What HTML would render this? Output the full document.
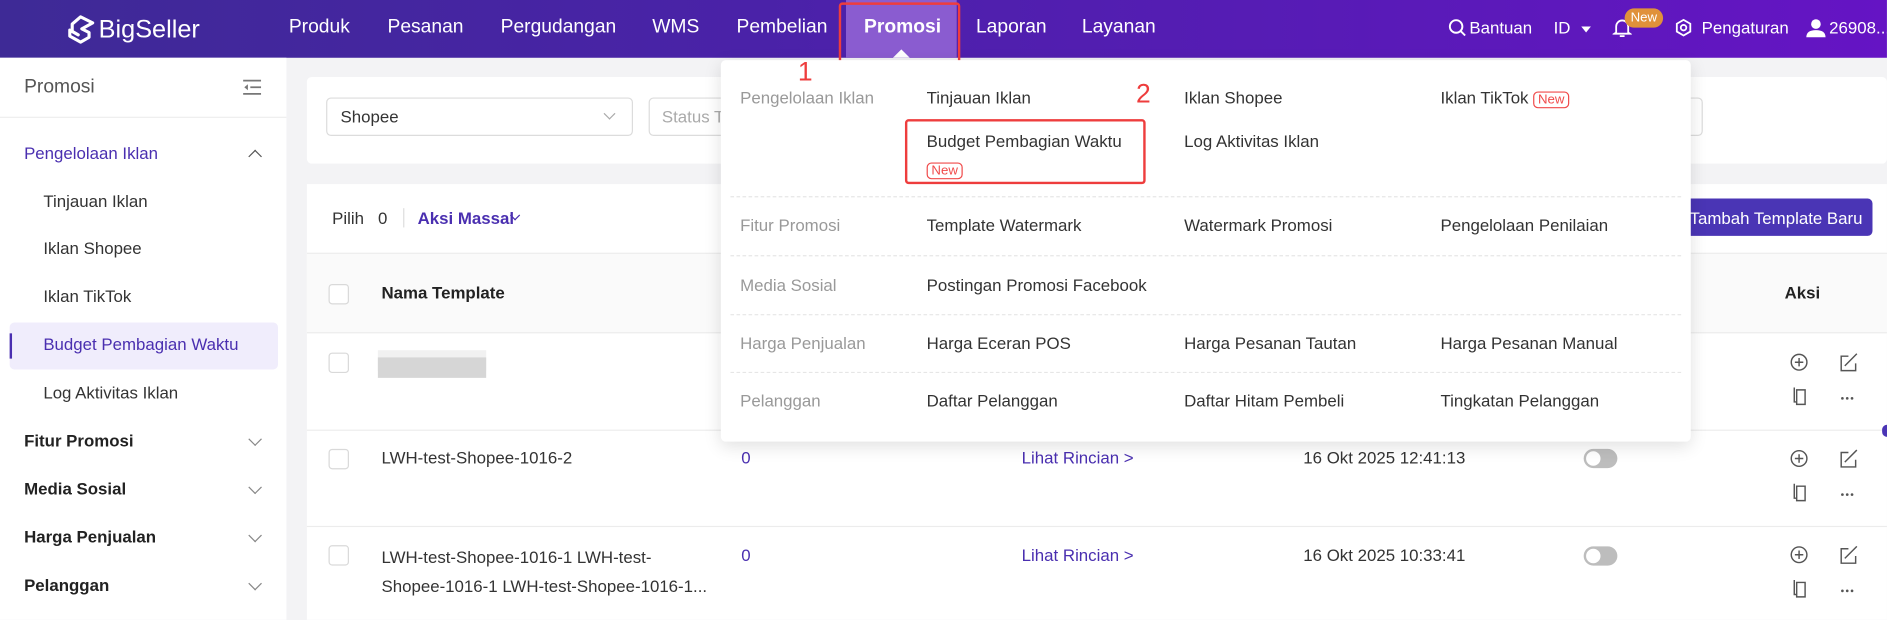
<!DOCTYPE html>
<html><head><meta charset="utf-8"><style>
html,body{margin:0;padding:0;width:1887px;height:620px;overflow:hidden;background:#f3f3f5;font-family:"Liberation Sans",Arial,sans-serif}
#w{position:absolute;left:0;top:0;width:1568px;height:515px;transform:scale(1.2034);transform-origin:0 0;background:#f3f3f5}
.a{position:absolute}
.t{position:absolute;white-space:nowrap;line-height:20px}
.nav{color:#fff;font-size:16px;top:13px}
.sb{font-size:14px;color:#333}
.sbh{font-size:14px;color:#222;font-weight:bold}
.chev{position:absolute;width:7px;height:7px;border-right:1.3px solid #888;border-bottom:1.3px solid #888;transform:rotate(45deg)}
.dl{font-size:14px;color:#999}
.di{font-size:14px;color:#333}
.sep{position:absolute;left:607px;width:790px;border-top:1px dashed #e6e6e6}
.new{display:inline-block;border:1px solid #f04a4a;color:#f04a4a;border-radius:4px;font-size:11px;line-height:12px;padding:0 3px}
.cb{position:absolute;width:15px;height:15px;border:1px solid #d9d9d9;border-radius:3px;background:#fff}
.rl{position:absolute;left:255px;width:1313px;border-top:1px solid #ececec}
.tg{position:absolute;width:28px;height:16px;border-radius:8px;background:#bdbdbd}
.tg:after{content:"";position:absolute;left:2px;top:2px;width:12px;height:12px;border-radius:6px;background:#fff}
</style></head><body><div id="w">
<!-- header -->
<div class="a" style="left:0;top:0;width:1568px;height:48px;background:linear-gradient(90deg,#3e2a96 0%,#4a22a8 40%,#6514c4 100%)"></div>
<svg class="a" style="left:54px;top:12px" width="26" height="26" viewBox="0 0 26 26"><path d="M13 2 L23 7 L14 12 L20 15 L20 19 L13 23 L4 18 L4 13 L11 17 L6 14 L6 8 Z" fill="none" stroke="#fff" stroke-width="2.6" stroke-linejoin="round"/></svg>
<div class="t" style="left:82px;top:13px;color:#fff;font-size:21px;line-height:24px">BigSeller</div>
<div class="a" style="left:703px;top:0;width:92px;height:48px;background:#8a5cd0"></div>
<div class="a" style="left:742px;top:41px;width:0;height:0;border-left:7px solid transparent;border-right:7px solid transparent;border-bottom:7px solid #fff"></div>
<div class="t nav" style="left:240px">Produk</div>
<div class="t nav" style="left:322px">Pesanan</div>
<div class="t nav" style="left:416px">Pergudangan</div>
<div class="t nav" style="left:542px">WMS</div>
<div class="t nav" style="left:612px">Pembelian</div>
<div class="t nav" style="left:718px;font-weight:bold">Promosi</div>
<div class="t nav" style="left:811px">Laporan</div>
<div class="t nav" style="left:899px">Layanan</div>
<div class="a" style="left:697px;top:2px;width:101px;height:56px;border:2px solid #ee3d3d;border-radius:3px;box-sizing:border-box"></div>
<svg class="a" style="left:1203px;top:15px" width="16" height="16" viewBox="0 0 16 16"><circle cx="7" cy="7" r="5.2" fill="none" stroke="#fff" stroke-width="1.6"/><path d="M11 11 L14.5 14.5" stroke="#fff" stroke-width="1.6"/></svg>
<div class="t" style="left:1221px;top:13px;color:#fff;font-size:14px">Bantuan</div>
<div class="t" style="left:1291px;top:13px;color:#fff;font-size:14px">ID</div>
<div class="a" style="left:1314px;top:22px;border-left:4px solid transparent;border-right:4px solid transparent;border-top:5px solid #fff"></div>
<svg class="a" style="left:1340px;top:14px" width="16" height="18" viewBox="0 0 16 18"><path d="M3 13 L3 8 A5 5 0 0 1 13 8 L13 13 L14.5 14 L1.5 14 Z M6 16 L10 16" fill="none" stroke="#fff" stroke-width="1.5"/></svg>
<div class="a" style="left:1350px;top:7px;width:32px;height:16px;border-radius:8px;background:#e0913a;color:#fff;font-size:11px;line-height:16px;text-align:center">New</div>
<svg class="a" style="left:1391px;top:15px" width="16" height="16" viewBox="0 0 16 16"><path d="M8 1.5 L13.6 4.75 L13.6 11.25 L8 14.5 L2.4 11.25 L2.4 4.75 Z" fill="none" stroke="#fff" stroke-width="1.5"/><circle cx="8" cy="8" r="2.3" fill="none" stroke="#fff" stroke-width="1.5"/></svg>
<div class="t" style="left:1414px;top:13px;color:#fff;font-size:14px">Pengaturan</div>
<svg class="a" style="left:1500px;top:14px" width="18" height="18" viewBox="0 0 18 18"><circle cx="9" cy="6" r="4" fill="#fff"/><path d="M1 17 Q1 11 9 11 Q17 11 17 17 Z" fill="#fff"/></svg>
<div class="t" style="left:1520px;top:13px;color:#fff;font-size:14px">26908...</div>
<!-- sidebar -->
<div class="a" style="left:0;top:48px;width:238px;height:467px;background:#fff"></div>
<div class="a" style="left:0;top:97px;width:238px;border-top:1px solid #eee"></div>
<div class="t" style="left:20px;top:63px;font-size:16px;color:#555">Promosi</div>
<svg class="a" style="left:202px;top:66px" width="15" height="13" viewBox="0 0 15 13"><path d="M0 1H15M6 6.5H15M0 12H15" stroke="#777" stroke-width="1.4"/><path d="M4 4L1 6.5L4 9Z" fill="#777"/></svg>
<div class="t" style="left:20px;top:117px;font-size:14px;color:#4a2fb0">Pengelolaan Iklan</div>
<div class="chev" style="left:208px;top:126px;transform:rotate(225deg);border-color:#555"></div>
<div class="t sb" style="left:36px;top:157px">Tinjauan Iklan</div>
<div class="t sb" style="left:36px;top:196px">Iklan Shopee</div>
<div class="t sb" style="left:36px;top:236px">Iklan TikTok</div>
<div class="a" style="left:8px;top:268px;width:223px;height:39px;background:#f0edfc;border-radius:4px"></div>
<div class="a" style="left:8px;top:277px;width:2px;height:21px;background:#4a2fb0"></div>
<div class="t sb" style="left:36px;top:276px;color:#4a2fb0">Budget Pembagian Waktu</div>
<div class="t sb" style="left:36px;top:316px">Log Aktivitas Iklan</div>
<div class="t sbh" style="left:20px;top:356px">Fitur Promosi</div>
<div class="t sbh" style="left:20px;top:396px">Media Sosial</div>
<div class="t sbh" style="left:20px;top:436px">Harga Penjualan</div>
<div class="t sbh" style="left:20px;top:476px">Pelanggan</div>
<div class="chev" style="left:208px;top:361px"></div>
<div class="chev" style="left:208px;top:401px"></div>
<div class="chev" style="left:208px;top:441px"></div>
<div class="chev" style="left:208px;top:481px"></div>
<!-- filter card -->
<div class="a" style="left:255px;top:64px;width:1313px;height:72px;background:#fff;border-radius:4px"></div>
<div class="a" style="left:271px;top:81px;width:255px;height:32px;border:1px solid #dcdcdc;border-radius:4px;box-sizing:border-box"></div>
<div class="t" style="left:283px;top:87px;font-size:14px;color:#333">Shopee</div>
<div class="chev" style="left:503px;top:91px;border-color:#aaa;width:6px;height:6px"></div>
<div class="a" style="left:539px;top:81px;width:876px;height:32px;border:1px solid #dcdcdc;border-radius:4px;box-sizing:border-box"></div>
<div class="t" style="left:550px;top:87px;font-size:14px;color:#aaa">Status T</div>
<!-- table card -->
<div class="a" style="left:255px;top:153px;width:1313px;height:362px;background:#fff"></div>
<div class="t" style="left:276px;top:171px;font-size:14px;color:#333">Pilih&nbsp;&nbsp;&nbsp;0</div>
<div class="a" style="left:335px;top:173px;height:16px;border-left:1px solid #ddd"></div>
<div class="t" style="left:347px;top:171px;font-size:14px;color:#4a2fb0;font-weight:bold">Aksi Massal</div>
<div class="chev" style="left:425px;top:176px;border-color:#4a2fb0;width:5px;height:5px;border-width:1px"></div>
<div class="a" style="left:1395px;top:165px;width:161px;height:31px;background:#4a35b5;border-radius:4px"></div>
<div class="t" style="left:1404px;top:171px;font-size:14px;color:#fff">Tambah Template Baru</div>
<div class="a" style="left:255px;top:210px;width:1313px;height:67px;background:#fafafa;border-top:1px solid #ececec;border-bottom:1px solid #ececec;box-sizing:border-box"></div>
<div class="cb" style="left:273px;top:236px"></div>
<div class="t" style="left:317px;top:233px;font-size:14px;font-weight:bold;color:#222">Nama Template</div>
<div class="t" style="left:1483px;top:233px;font-size:14px;font-weight:bold;color:#222">Aksi</div>
<div class="rl" style="top:357px"></div><div class="rl" style="top:437px"></div>
<div class="cb" style="left:273px;top:293px"></div>
<div class="a" style="left:314px;top:291px;width:90px;height:17px;background:#f1f1f1"></div>
<div class="a" style="left:314px;top:297px;width:90px;height:17px;background:#d6d6d6"></div>
<div class="cb" style="left:273px;top:373px"></div>
<div class="t" style="left:317px;top:370px;font-size:14px;color:#333">LWH-test-Shopee-1016-2</div>
<div class="t" style="left:616px;top:370px;font-size:14px;color:#4a2fb0">0</div>
<div class="t" style="left:849px;top:370px;font-size:14px;color:#4a2fb0">Lihat Rincian &gt;</div>
<div class="t" style="left:1083px;top:370px;font-size:14px;color:#333">16 Okt 2025 12:41:13</div>
<div class="tg" style="left:1316px;top:373px"></div>
<div class="cb" style="left:273px;top:453px"></div>
<div class="t" style="left:317px;top:451px;font-size:14px;color:#333;line-height:24px">LWH-test-Shopee-1016-1 LWH-test-<br>Shopee-1016-1 LWH-test-Shopee-1016-1...</div>
<div class="t" style="left:616px;top:451px;font-size:14px;color:#4a2fb0">0</div>
<div class="t" style="left:849px;top:451px;font-size:14px;color:#4a2fb0">Lihat Rincian &gt;</div>
<div class="t" style="left:1083px;top:451px;font-size:14px;color:#333">16 Okt 2025 10:33:41</div>
<div class="tg" style="left:1316px;top:454px"></div>
<!-- action icons -->
<svg class="a" style="left:1480px;top:285px" width="70" height="230" viewBox="0 0 70 230">
<g id="ic" fill="none" stroke="#555" stroke-width="1.2">
<circle cx="15" cy="16" r="6.5"/><path d="M15 12.5V19.5M11.5 16H18.5"/>
<path d="M56 11H50V23H62V17M53 19L63 9"/>
<path d="M11 37V49H13M13 39H20V51H13Z"/>
</g>
<g fill="#555"><circle cx="51" cy="46" r="1.1"/><circle cx="55" cy="46" r="1.1"/><circle cx="59" cy="46" r="1.1"/></g>
<g transform="translate(0,80)" fill="none" stroke="#555" stroke-width="1.2"><circle cx="15" cy="16" r="6.5"/><path d="M15 12.5V19.5M11.5 16H18.5"/><path d="M56 11H50V23H62V17M53 19L63 9"/><path d="M11 37V49H13M13 39H20V51H13Z"/></g>
<g transform="translate(0,80)" fill="#555"><circle cx="51" cy="46" r="1.1"/><circle cx="55" cy="46" r="1.1"/><circle cx="59" cy="46" r="1.1"/></g>
<g transform="translate(0,160)" fill="none" stroke="#555" stroke-width="1.2"><circle cx="15" cy="16" r="6.5"/><path d="M15 12.5V19.5M11.5 16H18.5"/><path d="M56 11H50V23H62V17M53 19L63 9"/><path d="M11 37V49H13M13 39H20V51H13Z"/></g>
<g transform="translate(0,160)" fill="#555"><circle cx="51" cy="46" r="1.1"/><circle cx="55" cy="46" r="1.1"/><circle cx="59" cy="46" r="1.1"/></g>
</svg>
<div class="a" style="left:1564px;top:353px;width:8px;height:10px;border-radius:5px;background:#4a35b5"></div>
<!-- dropdown -->
<div class="a" style="left:599px;top:50px;width:806px;height:317px;background:#fff;border-radius:4px;box-shadow:0 4px 14px rgba(0,0,0,0.12)"></div>
<div class="t dl" style="left:615px;top:71px">Pengelolaan Iklan</div>
<div class="t di" style="left:770px;top:71px">Tinjauan Iklan</div>
<div class="t di" style="left:984px;top:71px">Iklan Shopee</div>
<div class="t di" style="left:1197px;top:71px">Iklan TikTok <span class="new">New</span></div>
<div class="t di" style="left:770px;top:107px">Budget Pembagian Waktu</div>
<div class="a" style="left:770px;top:132px"><span class="new">New</span></div>
<div class="t di" style="left:984px;top:107px">Log Aktivitas Iklan</div>
<div class="sep" style="top:163px"></div>
<div class="t dl" style="left:615px;top:177px">Fitur Promosi</div>
<div class="t di" style="left:770px;top:177px">Template Watermark</div>
<div class="t di" style="left:984px;top:177px">Watermark Promosi</div>
<div class="t di" style="left:1197px;top:177px">Pengelolaan Penilaian</div>
<div class="sep" style="top:212px"></div>
<div class="t dl" style="left:615px;top:227px">Media Sosial</div>
<div class="t di" style="left:770px;top:227px">Postingan Promosi Facebook</div>
<div class="sep" style="top:261px"></div>
<div class="t dl" style="left:615px;top:275px">Harga Penjualan</div>
<div class="t di" style="left:770px;top:275px">Harga Eceran POS</div>
<div class="t di" style="left:984px;top:275px">Harga Pesanan Tautan</div>
<div class="t di" style="left:1197px;top:275px">Harga Pesanan Manual</div>
<div class="sep" style="top:309px"></div>
<div class="t dl" style="left:615px;top:323px">Pelanggan</div>
<div class="t di" style="left:770px;top:323px">Daftar Pelanggan</div>
<div class="t di" style="left:984px;top:323px">Daftar Hitam Pembeli</div>
<div class="t di" style="left:1197px;top:323px">Tingkatan Pelanggan</div>
<div class="a" style="left:752px;top:99px;width:200px;height:54px;border:2px solid #ee3d3d;border-radius:3px;box-sizing:border-box"></div>
<div class="t" style="left:663px;top:47px;color:#ee3d3d;font-size:22px;line-height:26px">1</div>
<div class="t" style="left:944px;top:65px;color:#ee3d3d;font-size:22px;line-height:26px">2</div>
</div></body></html>
